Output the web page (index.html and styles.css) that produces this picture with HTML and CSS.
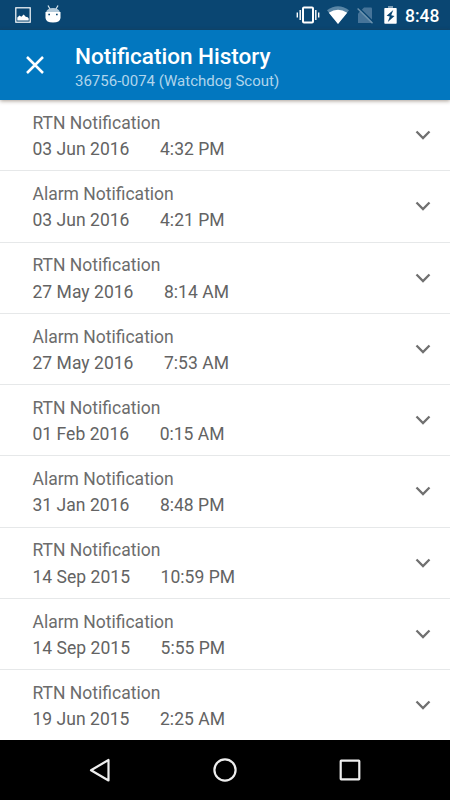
FILE: index.html
```
<!DOCTYPE html>
<html lang="en">
<head>
<meta charset="utf-8">
<title>Notification History</title>
<link rel="stylesheet" href="styles.css">
</head>
<body>
<div class="status">
  <svg class="s-img" width="16" height="16" viewBox="0 0 16 16"><rect x=".8" y=".8" width="14.4" height="14.4" fill="none" stroke="#fff" stroke-width="1.2"/><path d="M2.3 13.5v-3l2.2-2 1.8 1.2 2.4-2.2 2 2.2 2 .5 1 1.2v2.100z" fill="#fff"/></svg>
  <svg class="s-bot" width="16" height="18" viewBox="0 0 16 18"><path d="M3 .5l2 3.500M13 .5l-2 3.500" stroke="#dce8f0" stroke-width="1.200"/><path d="M1 7.500Q2 3 8 3t7 4.500z" fill="#b3c9d9"/><path d="M.5 7h15v6q-.5 4.500-7.500 4.500T.5 13z" fill="#fff"/><path d="M3.300 9.500h1.700M11 9.500h1.700" stroke="#0a4672" stroke-width="1.500"/></svg>
  <span class="fill"></span>
  <svg class="s-vib" width="24" height="18" viewBox="0 0 24 18"><rect x="7" y="1.500" width="10" height="15" rx="1" fill="none" stroke="#fff" stroke-width="2"/><path d="M4.200 4v10M1.300 6.500v5M19.800 4v10M22.700 6.500v5" stroke="#fff" stroke-width="1.400"/></svg>
  <svg class="s-wifi" width="22" height="18" viewBox="0 0 22 18"><path d="M0 4.300Q11-4 22 4.300L11 18z" fill="#5a86a6"/><path d="M1.800 6.700Q11 .8 20.200 6.700L11 18z" fill="#fff"/></svg>
  <svg class="s-sim" width="17" height="17" viewBox="0 0 17 17"><path d="M3 4.500L7 .5h7q1 0 1 1V16H1V6.500z" fill="#467499"/><path d="M1.500 .5L17 15.500" stroke="#0a4672" stroke-width="1.500"/><path d="M.6 1.500L15.500 16.200" stroke="#6d93ae" stroke-width="1.400"/></svg>
  <svg class="s-bat" width="13" height="18" viewBox="0 0 13 18"><path d="M4 0h5v2H4z" fill="#7d9db5"/><path d="M1 2h11q.7 0 .7.700V17q0 .700-.7.700H1q-.7 0-.7-.700V2.700Q.3 2 1 2z" fill="#fff"/><path d="M9.300 4L2.600 9.800l3.200.8L3.800 16l6.700-6-3.300-.8z" fill="#0a4672"/></svg>
  <span class="clock">8:48</span>
</div>
<header class="bar">
  <svg class="close" width="20" height="20" viewBox="0 0 20 20"><path d="M2 2l16 16M18 2L2 18" stroke="#fff" stroke-width="2.500"/></svg>
  <div class="titles"><h1>Notification History</h1><p>36756-0074 (Watchdog Scout)</p></div>
</header>
<main class="list"></main>
<nav class="nav">
  <svg width="24" height="26" viewBox="0 0 24 26"><path d="M3 13.200L20.500 3v20.500z" fill="none" stroke="#eee" stroke-width="2.200" stroke-linejoin="round"/></svg>
  <svg width="24" height="26" viewBox="0 0 24 26"><circle cx="12" cy="13" r="10.600" fill="none" stroke="#eee" stroke-width="2.200"/></svg>
  <svg width="24" height="26" viewBox="0 0 24 26"><rect x="2.700" y="3.700" width="18.600" height="18.600" rx=".5" fill="none" stroke="#eee" stroke-width="2.200"/></svg>
</nav>
<script src="list.js"></script>
</body>
</html>
```
FILE: styles.css
```
* { box-sizing: border-box; }
body { margin: 0; width: 450px; height: 800px; display: flex; flex-direction: column; overflow: hidden; background: #fff; font-family: Roboto, sans-serif; }
svg { display: block; flex: none; }
.status { height: 30px; flex: none; display: flex; align-items: center; padding: 0 10px 0 15px; background: #0a4672; color: #fff; }
.s-bot { margin-left: 14px; margin-top: -2px; }
.fill { flex: 1; }
.s-wifi { margin-left: 7px; }
.s-sim { margin-left: 8px; }
.s-bat { margin-left: 10px; }
.clock { width: 35px; margin-left: 8px; font-size: 17.5px; font-weight: 500; line-height: 30px; padding-top: 1px; white-space: nowrap; }
.bar { height: 70px; flex: none; display: flex; background: #0277bf; color: #fff; box-shadow: 0 1px 4px rgba(60, 40, 20, .45); position: relative; }
.close { margin: 25px 0 0 25px; }
.titles { margin: 12px 0 0 30px; }
h1 { margin: 0; font-size: 22.5px; font-weight: 500; line-height: 28px; }
p { margin: 0; font-size: 15px; line-height: 23px; color: #b0d5ec; }
.list { height: 640px; flex: none; overflow: hidden; }
.row { height: 71.25px; display: flex; align-items: center; justify-content: space-between; padding: 0 18px 0 32.5px; border-bottom: 1px solid #e6e8e9; color: #6c6c6c; font-size: 17.5px; line-height: 26.25px; }
.row:last-child { border-bottom-color: transparent; }
.text { padding-top: 2px; }
.when { display: flex; gap: 30.5px; color: #636363; letter-spacing: .03px; }
.nav { height: 60px; flex: none; display: flex; align-items: center; justify-content: space-between; padding: 0 88px; background: #000; }
```
FILE: list.js
```
const notifications = [
  ['RTN', '03 Jun 2016', '4:32 PM'],
  ['Alarm', '03 Jun 2016', '4:21 PM'],
  ['RTN', '27 May 2016', '8:14 AM'],
  ['Alarm', '27 May 2016', '7:53 AM'],
  ['RTN', '01 Feb 2016', '0:15 AM'],
  ['Alarm', '31 Jan 2016', '8:48 PM'],
  ['RTN', '14 Sep 2015', '10:59 PM'],
  ['Alarm', '14 Sep 2015', '5:55 PM'],
  ['RTN', '19 Jun 2015', '2:25 AM']
];
document.querySelector('.list').innerHTML = notifications.map(([type, date, time]) => `
  <div class="row">
    <div class="text"><div>${type} Notification</div><div class="when"><span>${date}</span><span>${time}</span></div></div>
    <svg width="18" height="12" viewBox="0 0 18 12"><path d="M2.500 2.500L9 9l6.500-6.500" fill="none" stroke="#707070" stroke-width="2.300"/></svg>
  </div>`).join('');
```
